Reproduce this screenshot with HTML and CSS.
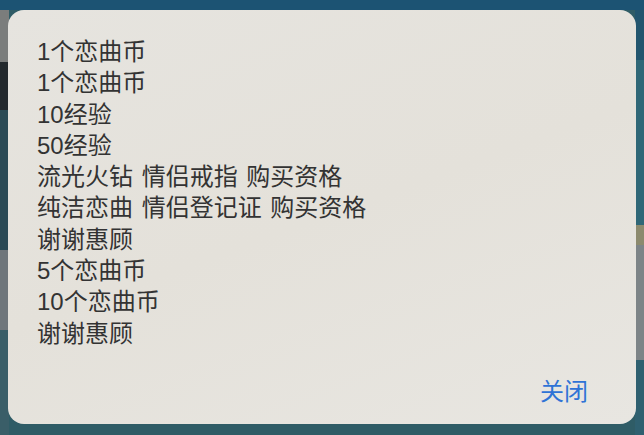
FILE: index.html
```html
<!DOCTYPE html>
<html lang="zh-CN">
<head>
<meta charset="utf-8">
<title>奖励列表</title>
<link rel="stylesheet" href="styles.css">
</head>
<body>
<div class="dialog">
  <ul class="prize-list">
    <li>1个恋曲币</li>
    <li>1个恋曲币</li>
    <li>10经验</li>
    <li>50经验</li>
    <li>流光火钻 情侣戒指 购买资格</li>
    <li>纯洁恋曲 情侣登记证 购买资格</li>
    <li>谢谢惠顾</li>
    <li>5个恋曲币</li>
    <li>10个恋曲币</li>
    <li>谢谢惠顾</li>
  </ul>
  <div class="footer">
    <button class="close-btn" type="button">关闭</button>
  </div>
</div>
</body>
</html>
```

FILE: styles.css
```css
html, body {
  margin: 0;
  padding: 0;
}

body {
  width: 644px;
  height: 435px;
  overflow: hidden;
  font-family: "Liberation Sans", "Noto Sans CJK SC", sans-serif;
  background:
    linear-gradient(#1c5373, #1c5373) left top / 100% 10px no-repeat,
    linear-gradient(to bottom, #7b7d7c 0 62px, #23292d 62px 110px, #2b4a55 110px 250px, #6f767b 250px 330px, #3a5e68 330px) left top / 9px 100% no-repeat,
    linear-gradient(to bottom, #22556e 0 60px, #2f6777 60px 225px, #8c8a6e 225px 245px, #7d8487 245px 360px, #2f6070 360px) right top / 9px 100% no-repeat,
    #2f5c66;
}

.dialog {
  box-sizing: border-box;
  margin: 10px 8px 0 8px;
  height: 414px;
  border-radius: 16px;
  background: linear-gradient(160deg, #e6e4df 0%, #e4e1da 50%, #e8e6e1 100%);
  display: flex;
  flex-direction: column;
  padding: 26px 48px 17px 29px;
}

.prize-list {
  list-style: none;
  margin: 0;
  padding: 0;
  flex: 1;
  color: #333333;
  font-size: 24px;
  line-height: 31.3px;
  word-spacing: 2px;
}

.prize-list li {
  white-space: nowrap;
}

.footer {
  display: flex;
  justify-content: flex-end;
}

.close-btn {
  border: 0;
  background: none;
  padding: 0;
  margin: 0;
  font-family: "Liberation Sans", "Noto Sans CJK SC", sans-serif;
  font-size: 24px;
  line-height: 31px;
  color: #2f73d6;
  cursor: pointer;
}
```
